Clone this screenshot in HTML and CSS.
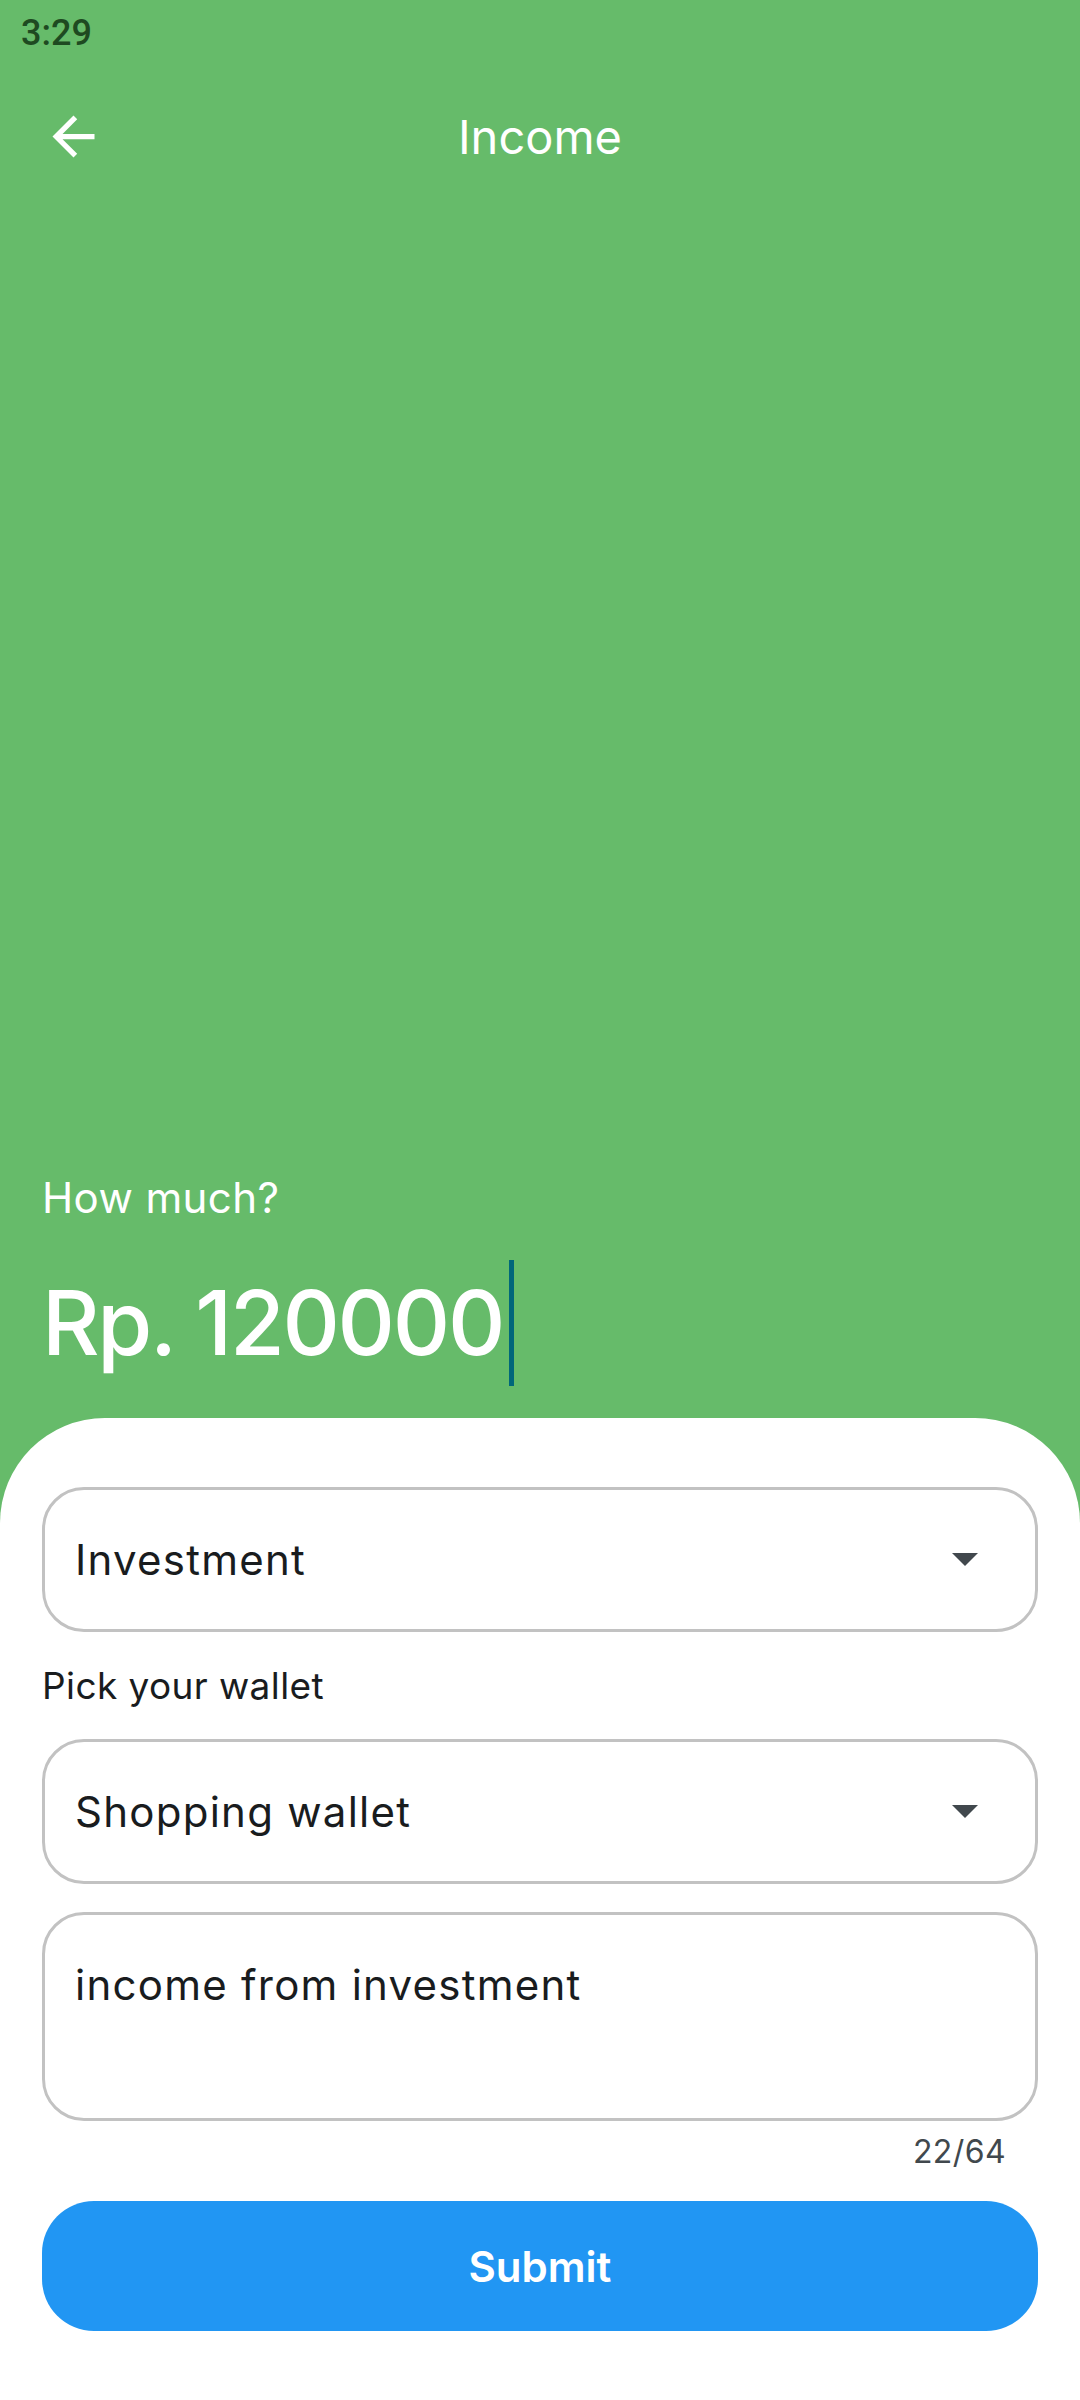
FILE: index.html
```html
<!DOCTYPE html>
<html lang="en">
<head>
<meta charset="utf-8">
<title>Income</title>
<link rel="stylesheet" href="styles.css">
</head>
<body>
<div class="screen">
  <div class="status">3:29</div>
  <header class="appbar">
    <div class="lead">
      <svg class="back" viewBox="0 0 24 24" width="63" height="63" aria-hidden="true">
        <path d="M20 11H7.83l5.59-5.59L12 4l-8 8 8 8 1.41-1.41L7.83 13H20v-2z" fill="#ffffff"/>
      </svg>
    </div>
    <h1 class="title">Income</h1>
    <div class="trail"></div>
  </header>
  <div class="spacer"></div>
  <section class="amount">
    <div class="amount-label">How much?</div>
    <div class="amount-row"><span class="amount-value">Rp. 120000</span><span class="cursor"></span></div>
  </section>
  <section class="sheet">
    <div class="field select">
      <span class="field-text">Investment</span>
      <svg class="drop" viewBox="0 0 10 5" width="26" height="13" aria-hidden="true"><path d="M0 0l5 5 5-5z" fill="#41484d"/></svg>
    </div>
    <div class="label">Pick your wallet</div>
    <div class="field select">
      <span class="field-text">Shopping wallet</span>
      <svg class="drop" viewBox="0 0 10 5" width="26" height="13" aria-hidden="true"><path d="M0 0l5 5 5-5z" fill="#41484d"/></svg>
    </div>
    <div class="field note">
      <span class="field-text">income from investment</span>
    </div>
    <div class="counter">22/64</div>
    <button class="submit">Submit</button>
  </section>
</div>
</body>
</html>
```

FILE: styles.css
```css
* { box-sizing: border-box; }
html, body { margin: 0; padding: 0; }
body { width: 1080px; height: 2400px; font-family: "Inter", "Noto Sans", sans-serif; }

.screen {
  width: 1080px;
  height: 2400px;
  background: #66bb6a;
  display: flex;
  flex-direction: column;
}

.status {
  height: 63px;
  padding: 2px 0 0 21px;
  font-family: "Roboto", sans-serif;
  font-weight: 500;
  font-size: 36px;
  line-height: 63px;
  color: #1e4a21;
}

.appbar {
  height: 147px;
  display: grid;
  grid-template-columns: 147px 1fr 147px;
  align-items: center;
}
.lead { display: flex; justify-content: center; align-items: center; }
.back { display: block; }
.title {
  margin: 0;
  text-align: center;
  font-weight: 400;
  font-size: 47px;
  line-height: 60px;
  color: #ffffff;
}

.spacer { flex: 1; }

.amount {
  padding: 0 42px;
  margin-bottom: 32px;
  color: #ffffff;
}
.amount-label {
  font-size: 42px;
  line-height: 50px;
  letter-spacing: 0.4px;
  margin-bottom: 37px;
}
.amount-row {
  display: flex;
  align-items: flex-start;
  height: 126px;
}
.amount-value {
  font-size: 89px;
  line-height: 126px;
  font-weight: 500;
  letter-spacing: -2.3px;
}
.cursor {
  width: 5px;
  height: 126px;
  margin-left: 6px;
  background: #00677a;
}

.sheet {
  height: 982px;
  background: #ffffff;
  border-radius: 105px 105px 0 0;
  padding: 69px 42px 69px;
  display: flex;
  flex-direction: column;
}

.field {
  border: 3px solid #c2c2c2;
  border-radius: 42px;
  display: flex;
  padding: 0 0 0 30px;
  color: #191c1e;
}
.field-text {
  font-size: 42px;
  line-height: 50px;
  letter-spacing: 1.25px;
}
.select {
  height: 145px;
  align-items: center;
  justify-content: space-between;
}
.drop { display: block; margin-right: 57px; }
.note {
  height: 209px;
  align-items: flex-start;
  padding-top: 45px;
  margin-top: 28px;
}

.label {
  margin-top: 32px;
  margin-bottom: 31px;
  font-size: 37px;
  line-height: 44px;
  letter-spacing: 0.4px;
  color: #191c1e;
}

.counter {
  margin-top: 9px;
  height: 44px;
  text-align: right;
  padding-right: 32px;
  font-size: 32px;
  line-height: 44px;
  letter-spacing: 0.4px;
  color: #41484d;
}

.submit {
  margin-top: 27px;
  height: 130px;
  border: none;
  border-radius: 52px;
  background: #2196f3;
  color: #ffffff;
  font-family: "Inter", sans-serif;
  font-size: 42px;
  font-weight: 600;
  padding: 0;
}
```
